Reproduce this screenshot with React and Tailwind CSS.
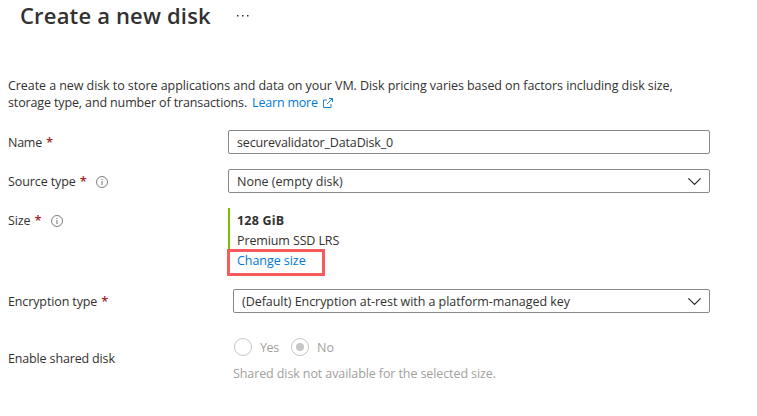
import React from "react";

function Info() {
  return (
    <svg className="h-3 w-3 shrink-0" viewBox="0 0 12 12" fill="none" stroke="#605e5c">
      <circle cx="6" cy="6" r="5.5" strokeWidth="0.8" />
      <path d="M6 5v4M6 3v1" strokeWidth="0.9" />
    </svg>
  );
}

function Chevron() {
  return (
    <svg className="h-[7px] w-[13px] shrink-0" viewBox="0 0 13 7" fill="none" stroke="#201f1e" strokeWidth="1.1">
      <path d="M0.4 0.4l6.1 6 6.1-6" />
    </svg>
  );
}

function Label({ text, required, info, className = "" }) {
  return (
    <div className="flex h-6 w-[220px] shrink-0 items-center">
      <span className={className}>{text}</span>
      {required && <span className="ml-1 text-[13px] font-semibold text-[#a4262c]">*</span>}
      {info && (
        <span className="ml-[9px] mt-px">
          <Info />
        </span>
      )}
    </div>
  );
}

function Field({ text, select, className = "" }) {
  return (
    <div className="flex h-6 flex-1 items-center justify-between rounded-[2px] border border-[#8a8886] pl-2 pr-[8px]">
      <span className={className}>{text}</span>
      {select && <Chevron />}
    </div>
  );
}

export default function App() {
  return (
    <main className="h-[416px] w-[757px] overflow-hidden whitespace-nowrap bg-white pl-2 pr-[47px] font-['Open_Sans','Noto_Sans',sans-serif] text-[12.5px] leading-[17px] text-[#323130]">
      <header className="flex h-8 items-center pl-3">
        <h1 className="w-[191px] pb-[2px] text-[22px] font-semibold leading-[30px] tracking-[0.17px]">Create a new disk</h1>
        <svg className="ml-[26px] h-[2px] w-3" viewBox="0 0 12 2" fill="#323130">
          <path d="M0 0h1.5v1.5H0zM5 0h1.5v1.5H5zM10 0h1.5v1.5H10z" />
        </svg>
      </header>
      <p className="mt-[45px]">
        <span className="block tracking-[-0.07px]">Create a new disk to store applications and data on your VM. Disk pricing varies based on factors including disk size,</span>
        <span className="flex items-center">
          <span className="tracking-[-0.13px]">storage type, and number of transactions.</span>
          <a className="ml-[5px] flex items-center tracking-[-0.2px] text-[#0078d4]">
            Learn more
            <svg className="ml-[5px] h-[10px] w-[10px]" viewBox="0 0 10 10" fill="none" stroke="#0078d4" strokeWidth="0.9">
              <path d="M4 2H.5v7.5H8V6M6 .5h3.5V4M9.5.5L4 6" />
            </svg>
          </a>
        </span>
      </p>
      <div className="mt-[19px] flex">
        <Label text="Name" required className="tracking-[-0.25px]" />
        <Field text="securevalidator_DataDisk_0" className="tracking-[-0.16px]" />
      </div>
      <div className="mt-[15px] flex">
        <Label text="Source type" required info className="tracking-[-0.1px]" />
        <Field text="None (empty disk)" select />
      </div>
      <div className="mt-[15px] flex h-[68px]">
        <Label text="Size" required info className="tracking-[-0.1px]" />
        <div className="relative h-[67px] border-l-2 border-[#7fba00] pl-[7px] pt-[3px] leading-5">
          <div className="font-bold tracking-[0.2px]">128 GiB</div>
          <div className="tracking-[-0.12px]">Premium SSD LRS</div>
          <div className="tracking-[-0.05px] text-[#0078d4]">Change size</div>
          <div className="absolute left-[-3px] top-[41px] h-[27px] w-[98px] border-3 border-[#f75b5b]" />
        </div>
      </div>
      <div className="mt-[13px] flex">
        <Label text="Encryption type" required className="tracking-[-0.12px]" />
        <div className="flex flex-1 pl-[5px]">
          <Field text="(Default) Encryption at-rest with a platform-managed key" select className="tracking-[-0.05px]" />
        </div>
      </div>
      <div className="mt-[24px] flex">
        <div className="pt-[9px]">
          <Label text="Enable shared disk" className="tracking-[-0.15px]" />
        </div>
        <div className="pl-[5px] text-[#a19f9d]">
          <div className="flex h-5 items-center">
            <span className="ml-px h-[18px] w-[18px] rounded-full border border-[#c8c6c4]" />
            <span className="ml-2 w-[31px] tracking-[-0.4px]">Yes</span>
            <span className="flex h-[18px] w-[18px] items-center justify-center rounded-full border border-[#c8c6c4]">
              <span className="h-2 w-2 rounded-full bg-[#c8c6c4]" />
            </span>
            <span className="ml-2">No</span>
          </div>
          <p className="mt-2 tracking-[-0.1px]">Shared disk not available for the selected size.</p>
        </div>
      </div>
    </main>
  );
}
